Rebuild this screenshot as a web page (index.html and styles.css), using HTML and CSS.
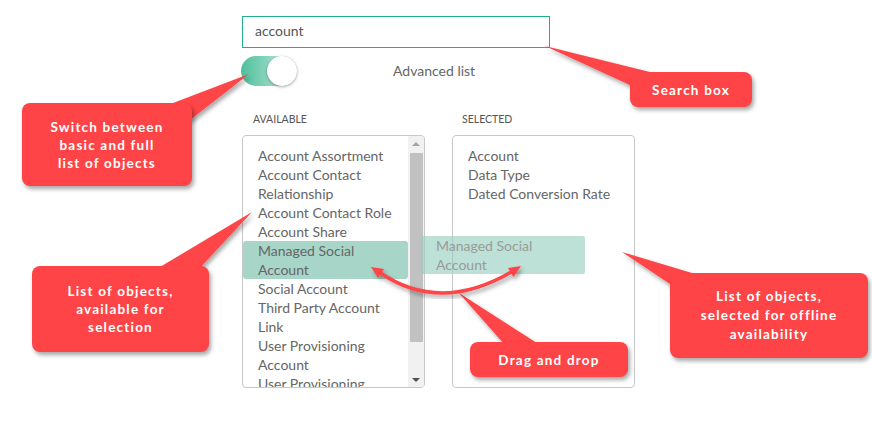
FILE: index.html
```html
<!DOCTYPE html>
<html lang="en">
<head>
<meta charset="utf-8">
<title>Offline objects</title>
<link rel="stylesheet" href="styles.css">
</head>
<body>
<div class="page">
  <main class="picker">
    <div class="search">account</div>
    <div class="switch-row">
      <div class="toggle"><span class="knob"></span></div>
      <span class="switch-label">Advanced list</span>
    </div>
    <div class="columns">
      <section class="col">
        <div class="col-title available-title">AVAILABLE</div>
        <div class="listbox">
          <ul class="items">
            <li>Account Assortment</li>
            <li>Account Contact<br>Relationship</li>
            <li>Account Contact Role</li>
            <li>Account Share</li>
            <li class="active">Managed Social<br>Account</li>
            <li>Social Account</li>
            <li>Third Party Account<br>Link</li>
            <li>User Provisioning<br>Account</li>
            <li>User Provisioning</li>
          </ul>
          <div class="scrollbar">
            <span class="arrow up"></span>
            <span class="thumb"></span>
            <span class="arrow down"></span>
          </div>
        </div>
      </section>
      <section class="col">
        <div class="col-title">SELECTED</div>
        <div class="listbox">
          <ul class="items">
            <li>Account</li>
            <li>Data Type</li>
            <li>Dated Conversion Rate</li>
          </ul>
        </div>
      </section>
    </div>
  </main>

  <div class="ghost">Managed Social<br>Account</div>

  <svg class="pointers" width="872" height="448" viewBox="0 0 872 448" aria-hidden="true">
    <defs>
      <filter id="sh" x="-20%" y="-20%" width="140%" height="140%">
        <feDropShadow dx="2" dy="3" stdDeviation="2" flood-color="#000" flood-opacity="0.35"/>
      </filter>
    </defs>
    <g fill="#fe4446" filter="url(#sh)">
      <polygon points="160,108 249,74 190,120"/>
      <polygon points="545,46 662,75 632,86"/>
      <polygon points="252,212 198,270 155,270"/>
      <polygon points="622,252 702,276 670,284"/>
      <polygon points="459,293 540,345 505,345"/>
    </g>
    <g filter="url(#sh)">
      <path d="M379,272 Q440,314.5 513,271" fill="none" stroke="#fe4446" stroke-width="3.5"/>
      <polygon points="371,267 384,269 378,278" fill="#fe4446"/>
      <polygon points="521,266 513.5,277 508,268" fill="#fe4446"/>
    </g>
  </svg>

  <div class="callout c-switch">Switch between<br>basic and full<br>list of objects</div>
  <div class="callout c-search">Search box</div>
  <div class="callout c-available">List of objects,<br>available for<br>selection</div>
  <div class="callout c-selected">List of objects,<br>selected for offline<br>availability</div>
  <div class="callout c-drag">Drag and drop</div>
</div>
</body>
</html>
```

FILE: styles.css
```css
* { box-sizing: border-box; }
html, body { margin: 0; padding: 0; background: #fff; }
body {
  font-family: Lato, "Liberation Sans", sans-serif;
  color: #666;
  width: 872px;
  height: 448px;
  overflow: hidden;
}
.page {
  position: relative;
  width: 872px;
  height: 448px;
}
.picker {
  display: flex;
  flex-direction: column;
  padding: 16px 0 0 242px;
}
.search {
  width: 308px;
  height: 32px;
  border: 1px solid #1fb08a;
  padding: 0 12px;
  font-size: 14px;
  line-height: 28px;
  color: #555;
}
.switch-row {
  display: flex;
  align-items: center;
  margin-top: 7px;
  height: 32px;
}
.toggle {
  position: relative;
  width: 56px;
  height: 30px;
  margin-left: -1px;
  border-radius: 15px;
  background: linear-gradient(90deg, #4fbf9c 0%, #86d3bb 45%, #b3e2d3 70%, #9fd9c6 100%);
}
.knob {
  position: absolute;
  right: 0;
  top: 0;
  width: 30px;
  height: 30px;
  border-radius: 50%;
  background: #fff;
  box-shadow: 0 1px 3px rgba(0,0,0,0.35);
}
.switch-label {
  margin-left: 96px;
  margin-bottom: 2px;
  font-size: 14px;
  color: #666;
}
.columns {
  display: flex;
  gap: 27px;
  margin-top: 26px;
}
.col {
  display: flex;
  flex-direction: column;
  width: 183px;
}
.col-title {
  font-size: 10.5px;
  line-height: 12px;
  color: #555;
  padding-left: 10px;
  margin-bottom: 10px;
}
.available-title { padding-left: 11px; }
.listbox {
  display: flex;
  height: 253px;
  border: 1px solid #c8c8c8;
  border-radius: 4px;
  overflow: hidden;
  background: #fff;
}
.items {
  flex: 1;
  list-style: none;
  margin: 0;
  padding: 9.5px 0 0 0;
  font-size: 14px;
  line-height: 19px;
  color: #666;
}
.items li {
  padding-left: 15px;
  white-space: nowrap;
}
.items li.active {
  background: #a7d5c7;
  border-radius: 3px;
}
.scrollbar {
  position: relative;
  width: 16px;
  background: #f1f1f1;
  display: flex;
  flex-direction: column;
  align-items: center;
}
.arrow {
  width: 0;
  height: 0;
  border-left: 4px solid transparent;
  border-right: 4px solid transparent;
}
.arrow.up {
  margin-top: 6px;
  border-bottom: 4px solid #a3a3a3;
}
.arrow.down {
  margin-top: 36px;
  border-top: 4px solid #505050;
}
.thumb {
  margin-top: 7px;
  width: 13px;
  height: 189px;
  background: #c1c1c1;
}
.ghost {
  position: absolute;
  left: 421px;
  top: 236px;
  width: 164px;
  height: 38px;
  padding: 0 15px;
  background: rgba(145, 205, 186, 0.6);
  border-radius: 2px;
  font-size: 14px;
  line-height: 19px;
  color: #9a9a9a;
}
.pointers {
  position: absolute;
  left: 0;
  top: 0;
}
.callout {
  position: absolute;
  display: flex;
  align-items: center;
  justify-content: center;
  text-align: center;
  background: #fe4446;
  color: #fff;
  border-radius: 8px;
  box-shadow: 2px 3px 4px rgba(0,0,0,0.35);
  font-family: Lato, "Liberation Sans", sans-serif;
  font-weight: 700;
  font-size: 13.5px;
  letter-spacing: 1.2px;
  line-height: 18px;
}
.c-switch { left: 22px; top: 103px; width: 170px; height: 83px; }
.c-search { left: 630px; top: 72px; width: 122px; height: 35px; }
.c-available { left: 32px; top: 266px; width: 177px; height: 86px; }
.c-selected { left: 670px; top: 273px; width: 198px; height: 85px; line-height: 19px; }
.c-drag { left: 470px; top: 342px; width: 158px; height: 35px; }
```
